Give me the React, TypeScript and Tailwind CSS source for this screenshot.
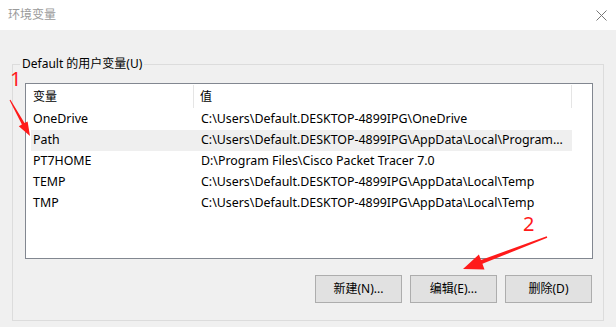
import React from "react";

const rows = [
  { name: "OneDrive", value: "C:\\Users\\Default.DESKTOP-4899IPG\\OneDrive" },
  { name: "Path", value: "C:\\Users\\Default.DESKTOP-4899IPG\\AppData\\Local\\Program...", sel: true },
  { name: "PT7HOME", value: "D:\\Program Files\\Cisco Packet Tracer 7.0" },
  { name: "TEMP", value: "C:\\Users\\Default.DESKTOP-4899IPG\\AppData\\Local\\Temp" },
  { name: "TMP", value: "C:\\Users\\Default.DESKTOP-4899IPG\\AppData\\Local\\Temp" },
];

const font = { fontFamily: '"Noto Sans", "Noto Sans CJK SC", sans-serif' };

export default function App() {
  return (
    <div
      className="relative w-[616px] h-[327px] bg-[#f0f0f0] overflow-hidden text-black flex flex-col"
      style={font}
    >
      {/* Title bar */}
      <div className="h-[30px] bg-white flex items-center justify-between pl-[8px] pr-[9px] shrink-0">
        <span className="text-[12px] text-[#9a9a9a] leading-none">环境变量</span>
        <svg width="11" height="11" viewBox="0 0 11 11" className="text-[#777]">
          <path d="M0.5 0.5 L10.5 10.5 M10.5 0.5 L0.5 10.5" stroke="currentColor" strokeWidth="1" />
        </svg>
      </div>

      {/* Group box */}
      <div className="relative mt-[34px] ml-[12px] w-[592px] h-[257px] border border-[#dcdcdc] pt-[18px] pl-[12px]">
        <span className="absolute left-[7px] top-[-9px] px-[2px] bg-[#f0f0f0] text-[12px] leading-[16px]">
          Default 的用户变量(U)
        </span>

        {/* List */}
        <div className="w-[568px] h-[176px] border border-[#828790] bg-white flex flex-col">
          <div className="h-[25px] flex items-stretch text-[12px] shrink-0">
            <div className="w-[168px] flex items-center pl-[7px] border-r border-[#e5e5e5] my-[1px]">变量</div>
            <div className="w-[378px] flex items-center pl-[6px] border-r border-[#e5e5e5] my-[1px]">值</div>
          </div>
          <div className="flex flex-col pl-[5px]">
            {rows.map((r) => (
              <div
                key={r.name}
                className={`h-[21px] w-[541px] flex items-center text-[12.4px] ${r.sel ? "bg-[#efefef]" : ""}`}
              >
                <div className="w-[168px] pl-[2px] whitespace-nowrap">{r.name}</div>
                <div className="pl-[2px] whitespace-nowrap">{r.value}</div>
              </div>
            ))}
          </div>
        </div>

        {/* Buttons */}
        <div className="flex justify-end gap-[8px] mt-[16px] w-[567px]">
          {["新建(N)...", "编辑(E)...", "删除(D)"].map((b) => (
            <button
              key={b}
              className="w-[87px] h-[28px] border border-[#adadad] bg-[#e1e1e1] text-[12px] flex items-center justify-center"
            >
              {b}
            </button>
          ))}
        </div>
      </div>

      {/* Red annotations */}
      <span className="absolute left-[10px] top-[68px] text-[20px] leading-[22px] text-[#ff1a1a]">1</span>
      <span className="absolute left-[523px] top-[213px] text-[20px] leading-[22px] text-[#ff1a1a]">2</span>
      <svg className="absolute inset-0 pointer-events-none" width="616" height="327">
        <polygon
          fill="#ff1a1a"
          points="9.56,100.24 21.9,124.5 18.8,126.2 30,136 27.6,121.4 24.5,123.1 10.44,99.76"
        />
        <polygon
          fill="#ff1a1a"
          points="546.75,236.35 481,260 478.9,254.4 463,269 484.5,269.4 482.4,263.8 547.25,237.65"
        />
      </svg>
    </div>
  );
}
